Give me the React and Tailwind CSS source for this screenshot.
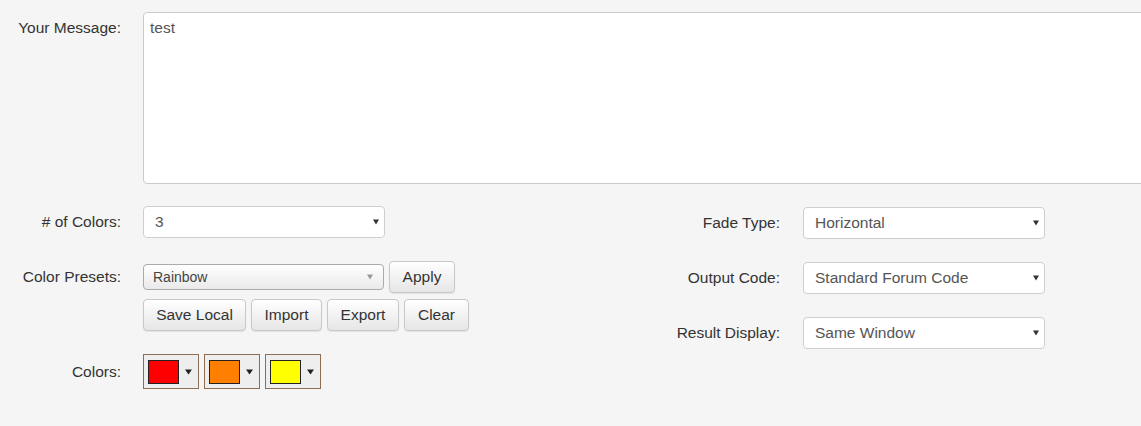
import React from "react";

const font = { fontFamily: '"Liberation Sans", Arial, Helvetica, sans-serif' };

function Arrow({ color = "#333", w = 6 }) {
  return (
    <svg width={w} height="6" viewBox="0 0 6 6" className="shrink-0" preserveAspectRatio="none">
      <path d="M0 0.5 H6 L3 5.5 Z" fill={color} />
    </svg>
  );
}

function Select({ value }) {
  return (
    <div className="flex h-[32px] w-[242px] items-center justify-between rounded-[4px] border border-[#cfcfcf] bg-white pl-[11px] pr-[5px] text-[15.5px] text-[#555]">
      <span>{value}</span>
      <Arrow />
    </div>
  );
}

function Btn({ children, w }) {
  return (
    <div
      className={`flex h-[32px] items-center justify-center rounded-[4px] border border-[#c8c8c8] bg-gradient-to-b from-white to-[#e6e6e6] text-[15.5px] text-[#333] shadow-[0_1px_1px_rgba(0,0,0,0.08)] ${w}`}
    >
      {children}
    </div>
  );
}

function Swatch({ color }) {
  return (
    <div className="flex h-[35px] w-[56px] items-center border border-[#8d6e55] bg-[#eeeeee] pl-[4px]">
      <div className="h-[24px] w-[31px] border-[1.5px] border-[#222]" style={{ background: color }} />
      <div className="ml-[6px]">
        <Arrow color="#222" w={7} />
      </div>
    </div>
  );
}

export default function App() {
  return (
    <div
      className="h-[426px] w-[1141px] overflow-hidden bg-[#f5f5f5] text-[15.5px] text-[#333]"
      style={font}
    >
      <div className="flex pt-[12px]">
        <div className="w-[121px] shrink-0 whitespace-nowrap pt-[7px] text-right leading-[18px]">Your Message:</div>
        <div className="ml-[22px] h-[172px] w-[1020px] shrink-0 rounded-[4px] border border-[#cbcbcb] bg-white px-[6px] pt-[6px] text-[15.5px] leading-[18px] text-[#555]">
          test
        </div>
      </div>

      <div className="mt-[22px] flex">
        {/* left column */}
        <div className="w-[640px] shrink-0">
          <div className="flex items-center">
            <div className="w-[121px] shrink-0 whitespace-nowrap text-right">
              # of Colors:
            </div>
            <div className="ml-[22px]">
              <Select value="3" />
            </div>
          </div>

          <div className="mt-[23px] flex">
            <div className="w-[121px] shrink-0 whitespace-nowrap pt-[7px] text-right leading-[18px]">Color Presets:</div>
            <div className="ml-[22px]">
              <div className="flex items-center gap-[5px]">
                <div className="flex h-[26px] w-[241px] items-center justify-between rounded-[4px] border border-[#aaa] bg-gradient-to-b from-white to-[#eaeaea] pl-[9px] pr-[10px] text-[14px] text-[#444]">
                  <span>Rainbow</span>
                  <Arrow color="#999" />
                </div>
                <Btn w="w-[66px]">Apply</Btn>
              </div>
              <div className="mt-[6px] flex gap-[5px]">
                <Btn w="w-[103px]">Save Local</Btn>
                <Btn w="w-[71px]">Import</Btn>
                <Btn w="w-[72px]">Export</Btn>
                <Btn w="w-[65px]">Clear</Btn>
              </div>
            </div>
          </div>

          <div className="mt-[23px] flex items-center">
            <div className="w-[121px] shrink-0 whitespace-nowrap text-right">Colors:</div>
            <div className="ml-[22px] flex gap-[5px]">
              <Swatch color="#ff0000" />
              <Swatch color="#ff8000" />
              <Swatch color="#ffff00" />
            </div>
          </div>
        </div>

        {/* right column */}
        <div className="flex flex-col gap-[23px] pt-[1px]">
          <div className="flex items-center">
            <div className="w-[140px] shrink-0 whitespace-nowrap text-right">Fade Type:</div>
            <div className="ml-[23px]">
              <Select value="Horizontal" />
            </div>
          </div>
          <div className="flex items-center">
            <div className="w-[140px] shrink-0 whitespace-nowrap text-right">Output Code:</div>
            <div className="ml-[23px]">
              <Select value="Standard Forum Code" />
            </div>
          </div>
          <div className="flex items-center">
            <div className="w-[140px] shrink-0 whitespace-nowrap text-right">Result Display:</div>
            <div className="ml-[23px]">
              <Select value="Same Window" />
            </div>
          </div>
        </div>
      </div>
    </div>
  );
}
